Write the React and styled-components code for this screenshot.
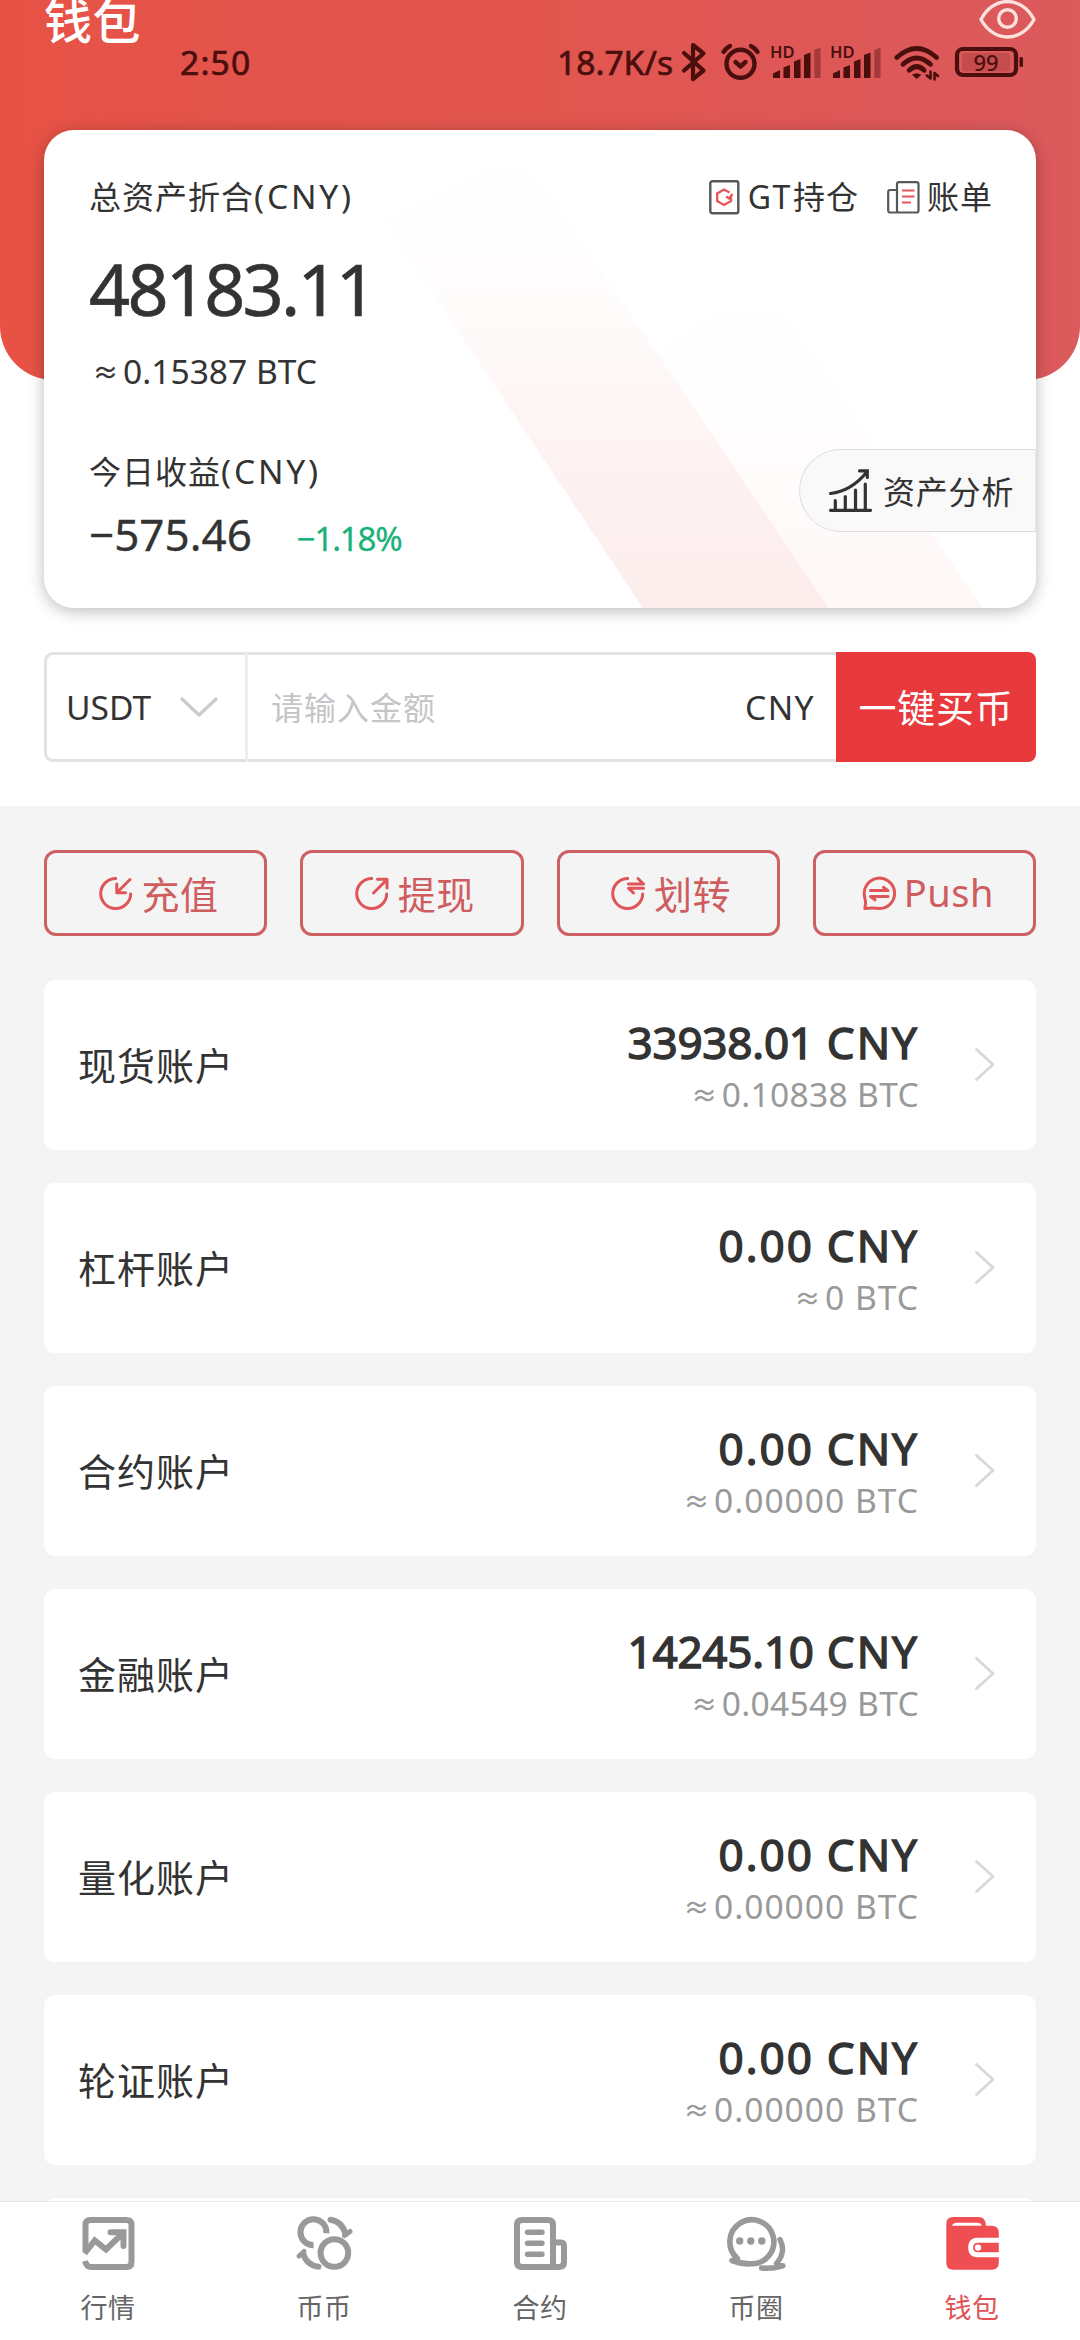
import React from 'react'
import styled, { createGlobalStyle } from 'styled-components'

const GlobalStyle = createGlobalStyle`
  *{
    box-sizing: border-box;
    margin: 0;
    padding: 0;
  }
  body{
    width: 1080px;
    background-color: #fff;
    font-family: "Noto Sans", "Noto Sans CJK SC", sans-serif;
    color: #333;
  }
  svg{
    display: block;
    flex-shrink: 0;
    overflow: visible;
  }
`;

const Page = styled.div`
  position: relative;
  width: 1080px;
  height: 2340px;
  overflow: hidden;
  display: flex;
  flex-direction: column;
`;

const Hero = styled.header`
  height: 380px;
  flex-shrink: 0;
  border-radius: 0 0 54px 54px;
  background: linear-gradient(90deg, #e85245 0%, #e3544b 22%, #e2564e 50%, #df5756 72%, #db5a5c 100%);
`;

const TitleBar = styled.div`
  height: 42px;
  padding: 0 44px;
  display: flex;
  justify-content: space-between;
  h1{
    font-size: 48px;
    line-height: 42px;
    font-weight: 500;
    letter-spacing: 0.5px;
    color: #fff;
  }
`;

const StatusBar = styled.div`
  position: absolute;
  top: 0;
  left: 0;
  right: 0;
  height: 124px;
  padding: 0 57px 0 180px;
  display: flex;
  align-items: center;
  font-size: 33.6px;
  color: #4a0f0d;
  -webkit-text-stroke: 0.7px #4a0f0d;
  .status__time{
    letter-spacing: 1.2px;
  }
  .status__speed{
    margin-left: auto;
    width: 118px;
    white-space: nowrap;
  }
`;

const StatusIcon = styled.svg`
  height: 40px;
  width: ${({ $w }) => $w}px;
  margin-left: ${({ $gap }) => $gap}px;
  -webkit-text-stroke: 0;
`;

const Card = styled.section`
  position: relative;
  flex-shrink: 0;
  height: 478px;
  margin: -250px 44px 0;
  padding: 43px 0 0 45px;
  border-radius: 30px;
  background-color: #fff;
  box-shadow: 0 3px 16px rgba(0, 0, 0, 0.27);
`;

const Stripes = styled.svg`
  position: absolute;
  top: 0;
  left: 0;
`;

const CardRow = styled.div`
  position: relative;
  display: flex;
  justify-content: space-between;
  align-items: flex-start;
  margin-top: ${({ $top }) => $top || 0}px;
`;

const Label = styled.p`
  height: 48px;
  font-size: 32px;
  line-height: 47px;
  letter-spacing: 1px;
  white-space: nowrap;
  span{
    font-size: 33.6px;
    line-height: 1;
    letter-spacing: 2.8px;
  }
`;

const Total = styled.p`
  position: relative;
  margin-top: 22px;
  font-size: 72px;
  line-height: 90px;
  letter-spacing: -2.8px;
  -webkit-text-stroke: 0.6px #333;
`;

const TotalBtc = styled.p`
  position: relative;
  height: 40px;
  margin: 18px 0 0 4px;
  font-size: 33.6px;
  line-height: 40px;
`;

// the sign sits closer to its number than a full space
const Approx = styled.span`
  margin-right: 5px;
  font-size: 25px;
  line-height: 1;
  letter-spacing: 0;
  position: relative;
  top: -2px;
  -webkit-text-stroke: 0.5px currentColor;
`;

const Profit = styled.p`
  margin-top: 8px;
  font-size: 44px;
  line-height: 60px;
  -webkit-text-stroke: 0.3px #333;
  span{
    margin-left: 45px;
    font-size: 33px;
    letter-spacing: -1.2px;
    color: #1bb17a;
    -webkit-text-stroke: 0.3px #1bb17a;
  }
`;

const CardLinks = styled.div`
  display: flex;
  gap: 28px;
  padding-right: 43px;
`;

const CardLink = styled.a`
  display: flex;
  align-items: center;
  gap: ${({ $gap }) => $gap}px;
  font-size: 32px;
  line-height: 48px;
  letter-spacing: 1px;
  .link__latin{
    margin-right: 1px;
    letter-spacing: 1.6px;
  }
`;

const Analysis = styled.a`
  width: 237px;
  height: 83px;
  margin-top: 1px;
  padding-left: 29px;
  display: flex;
  align-items: center;
  gap: 11px;
  border: 1.5px solid #dedede;
  border-right-color: #e8e8e8;
  border-radius: 42px 0 0 42px;
  background-color: #faf9fa;
  font-size: 32px;
  letter-spacing: 0.8px;
  span{
    padding-bottom: 2px;
  }
`;

const BuyRow = styled.div`
  flex-shrink: 0;
  height: 110px;
  margin: 44px 44px;
  display: flex;
  font-size: 33.6px;
`;

const CoinSelect = styled.div`
  width: 204px;
  padding: 0 27px 1px 19px;
  display: flex;
  align-items: center;
  justify-content: space-between;
  border: 3px solid #e2e2e2;
  border-right-color: #eeeeee;
  border-radius: 9px 0 0 9px;
`;

const AmountBox = styled.div`
  flex: 1;
  padding: 0 21px 1px 23px;
  display: flex;
  align-items: center;
  justify-content: space-between;
  border-top: 3px solid #e2e2e2;
  border-bottom: 3px solid #e2e2e2;
  letter-spacing: 1.4px;
  .amount__hint{
    padding-bottom: 2px;
    font-size: 32px;
    letter-spacing: 1px;
    color: #c5c5c8;
  }
`;

const BuyButton = styled.button`
  width: 200px;
  padding-bottom: 3px;
  border: none;
  border-radius: 0 8px 8px 0;
  background-color: #e83a3c;
  color: #fff;
  font-family: inherit;
  font-size: 38px;
  letter-spacing: 0.8px;
  white-space: nowrap;
`;

const Panel = styled.main`
  flex: 1;
  min-height: 0;
  overflow: hidden;
  padding: 44px 44px 0;
  background-color: #f4f4f4;
`;

const Actions = styled.div`
  display: grid;
  grid-template-columns: repeat(4, 1fr);
  gap: 33px;
`;

const ActionButton = styled.button`
  height: 86px;
  display: flex;
  align-items: center;
  justify-content: center;
  gap: 9px;
  padding-left: 6px;
  border: 3px solid #cd6063;
  border-radius: 12px;
  background: none;
  color: #cf5d5f;
  font-family: inherit;
  font-size: 38px;
  letter-spacing: 0.5px;
  span{
    padding-bottom: 2px;
  }
`;

const AccountList = styled.div`
  margin-top: 44px;
  display: flex;
  flex-direction: column;
  gap: 33px;
`;

const AccountRow = styled.div`
  height: 170px;
  flex-shrink: 0;
  padding: 0 41px 0 34px;
  display: flex;
  align-items: center;
  border-radius: 11px;
  background-color: #fff;
  .account__name{
    flex: 1;
    padding-bottom: 3px;
    font-size: 38px;
    letter-spacing: 1px;
  }
  .account__sum{
    height: 170px;
    padding-top: 32px;
    margin-right: 56px;
    text-align: right;
  }
`;

// zeros are set a little wider than the other digits
const Cny = styled.p`
  font-size: 44px;
  line-height: 60px;
  letter-spacing: ${({ $empty }) => ($empty ? 2 : -0.2)}px;
  -webkit-text-stroke: 1.4px #333;
  span{
    margin-left: 13px;
    letter-spacing: 2px;
  }
`;

const Btc = styled.p`
  font-size: 33.6px;
  line-height: 44px;
  letter-spacing: ${({ $empty }) => ($empty ? 1 : 0.3)}px;
  color: #999;
`;

const TabBar = styled.nav`
  height: 139px;
  flex-shrink: 0;
  display: grid;
  grid-template-columns: repeat(5, 1fr);
  border-top: 1px solid #e8e8e8;
  background-color: #fff;
`;

const Tab = styled.a`
  display: flex;
  flex-direction: column;
  align-items: center;
  padding-top: 13px;
  font-size: 27px;
  letter-spacing: 0.5px;
  line-height: 40px;
  color: ${({ $active }) => ($active ? '#e05154' : '#666')};
  svg{
    margin-bottom: 16px;
  }
`;

function SignalIcon({ gap }) {
  return (
    <StatusIcon $w={50} $gap={gap} viewBox="0 0 50 40" fill="#4a0f0d">
      <text x="-1" y="16" fontSize="16.5" fontWeight="600">HD</text>
      <path d="M2 36V31.5L9 28V36Z" />
      <path d="M12.5 36V25.5L19 23V36Z" />
      <path d="M23 36V19.5L29.5 17V36Z" />
      <path d="M33 36V13L39.5 10.5V36Z" />
      <path d="M43.3 36V8L49.5 5.5V36Z" opacity="0.4" />
    </StatusIcon>
  )
}

function Status() {
  const line = { fill: 'none', stroke: '#4a0f0d', strokeLinecap: 'round', strokeLinejoin: 'round' }
  return (
    <StatusBar>
      <span className="status__time">2:50</span>
      <span className="status__speed">18.7K/s</span>
      <StatusIcon $w={24} $gap={7} viewBox="0 0 24 40" {...line} strokeWidth="4.2">
        <path d="M2 11L21.5 28.5L11 37V3L21.5 11.5L2 28.5" />
      </StatusIcon>
      <StatusIcon $w={39} $gap={15} viewBox="0 0 39 40" {...line} strokeWidth="4.4">
        <circle cx="19.5" cy="21.8" r="14" />
        <path d="M2.5 10Q5 6 9 4M36.5 10Q34 6 30 4M14.5 20L19.5 24.5L24.5 20" />
      </StatusIcon>
      <SignalIcon gap={11} />
      <SignalIcon gap={10} />
      <StatusIcon $w={45} $gap={13} viewBox="0 0 45 40" {...line} strokeWidth="4.8">
        <path d="M2.8 15.5Q22.7 -2.5 42.6 15.5M9 22.3Q22.7 9.5 36.4 22.3M15.2 28.3Q22.7 21 30.2 28.3" />
        <path d="M18 32.8Q22.7 29.5 27.4 32.8L22.7 37Z" fill="#4a0f0d" stroke="none" />
        <path d="M36.5 29.5V36.5L32.8 33.5M40.5 37.5V31L44 34" strokeWidth="2.6" />
      </StatusIcon>
      <StatusIcon $w={68} $gap={16} viewBox="0 0 68 40">
        <rect x="2" y="7" width="59" height="26" rx="6" fill="none" stroke="#4a0f0d" strokeWidth="4.2" />
        <rect x="7" y="11" width="48" height="18.5" rx="2" fill="#4a0f0d" opacity="0.16" />
        <rect x="64.5" y="15" width="3.5" height="10" rx="1.5" fill="#4a0f0d" />
        <text x="31" y="28.5" textAnchor="middle" fontSize="22" fontWeight="500" fill="#4a0f0d">99</text>
      </StatusIcon>
    </StatusBar>
  )
}

function AssetCard() {
  return (
    <Card>
      <Stripes width="992" height="478" viewBox="0 0 992 478">
        <defs>
          <linearGradient id="stripeMain" x1="0" y1="0" x2="0" y2="1">
            <stop offset="0" stopColor="#f8cfcc" stopOpacity="0" />
            <stop offset="0.3" stopColor="#f8cfcc" stopOpacity="0.06" />
            <stop offset="0.75" stopColor="#f8cfcc" stopOpacity="0.29" />
            <stop offset="1" stopColor="#f8cfcc" stopOpacity="0.36" />
          </linearGradient>
          <linearGradient id="stripeSide" x1="0" y1="0" x2="0" y2="1">
            <stop offset="0" stopColor="#fadbd6" stopOpacity="0" />
            <stop offset="0.5" stopColor="#fadbd6" stopOpacity="0.06" />
            <stop offset="1" stopColor="#fadbd6" stopOpacity="0.22" />
          </linearGradient>
        </defs>
        <path d="M340 90L475 20L785 478H599Z" fill="url(#stripeMain)" />
        <path d="M609 223L720 150L938 478H785Z" fill="url(#stripeSide)" />
      </Stripes>
      <CardRow>
        <Label>总资产折合<span>(CNY)</span></Label>
        <CardLinks>
          <CardLink $gap={8}>
            <svg width="31" height="35" viewBox="0 0 31 35" fill="none">
              <rect x="1.3" y="1.3" width="28" height="32" rx="2" stroke="#55585b" strokeWidth="2.4" />
              <path d="M22 16.5V21L15 25L8.2 21V13.5L15 9.5L20.5 12.5M17 16.5L20 18.5L23.5 14" stroke="#e8555a" strokeWidth="2.3" />
            </svg>
            <span><span className="link__latin">GT</span>持仓</span>
          </CardLink>
          <CardLink $gap={7}>
            <svg width="33" height="33" viewBox="0 0 33 33" fill="none">
              <path d="M10 9H3Q1.2 9 1.2 11V29.5Q1.2 31.5 3 31.5H10" stroke="#55585b" strokeWidth="2.2" />
              <rect x="10" y="1.2" width="21.5" height="30.3" rx="2" stroke="#55585b" strokeWidth="2.2" />
              <path d="M15 9.5H27.5M15 15.5H27.5M15 21.5H24" stroke="#e8555a" strokeWidth="2.2" />
            </svg>
            账单
          </CardLink>
        </CardLinks>
      </CardRow>
      <Total>48183.11</Total>
      <TotalBtc><Approx>≈</Approx>0.15387 BTC</TotalBtc>
      <CardRow $top={57}>
        <div>
          <Label>今日收益<span>(CNY)</span></Label>
          <Profit>−575.46<span>−1.18%</span></Profit>
        </div>
        <Analysis>
          <svg width="43" height="43" viewBox="0 0 43 43" fill="none" stroke="#333" strokeWidth="3.2" strokeLinecap="round">
            <path d="M1.5 41.3H41.5M6.3 40V31.5M16.3 40V27.5M26.5 40V21M36.3 40V15" />
            <path d="M1.5 24.5Q22 22 37 4M30.5 1.8H38.3V8.5" />
          </svg>
          <span>资产分析</span>
        </Analysis>
      </CardRow>
    </Card>
  )
}

const ring = 'M16.7 2.5A15 15 0 1 0 31.7 18'

const actions = [
  { text: '充值', paths: [ring, 'M31 3.5L18.5 16M17.8 8V16.7H26.5'] },
  { text: '提现', paths: [ring, 'M18.5 17L31 4.5M22.5 3.2H32V12'] },
  { text: '划转', paths: [ring, 'M17.5 8H32.5L27 2.5M32.5 12.2H17.5L22.5 17'] },
  {
    text: 'Push',
    paths: [
      'M3.8 32.5Q5.5 27 3.8 21.5A15.2 15.2 0 1 1 19 32.5Q11 31.5 3.8 32.5Z',
      'M9.5 14.6H27L22.5 11.3M27 20.6H9.5L14 23.8',
    ],
  },
]

const accounts = [
  { name: '现货账户', cny: '33938.01', btc: '0.10838' },
  { name: '杠杆账户', cny: '0.00', btc: '0' },
  { name: '合约账户', cny: '0.00', btc: '0.00000' },
  { name: '金融账户', cny: '14245.10', btc: '0.04549' },
  { name: '量化账户', cny: '0.00', btc: '0.00000' },
  { name: '轮证账户', cny: '0.00', btc: '0.00000' },
]

function Account({ name, cny, btc }) {
  const empty = Number(cny) === 0
  return (
    <AccountRow>
      <p className="account__name">{name}</p>
      <div className="account__sum">
        <Cny $empty={empty}>{cny}<span>CNY</span></Cny>
        <Btc $empty={empty}><Approx>≈</Approx>{btc} BTC</Btc>
      </div>
      <svg width="20" height="34" viewBox="0 0 20 34" fill="none" stroke="#d8d8d8" strokeWidth="2.8" strokeLinecap="round" strokeLinejoin="round">
        <path d="M1.5 1.5L18 16.5L1.5 31.5" />
      </svg>
    </AccountRow>
  )
}

function Tabs() {
  const line = { fill: 'none', stroke: '#999', strokeWidth: 6, strokeLinecap: 'round' }
  return (
    <TabBar>
      <Tab>
        <svg width="57" height="57" viewBox="0 0 57 57" {...line}>
          <path d="M5.5 36V10Q5.5 5 10.5 5H46.5Q51.5 5 51.5 10V47Q51.5 52 46.5 52H11Q6.5 52 5 46" strokeLinecap="butt" />
          <path d="M4.5 38.5L14.8 25.5L26 34.5L42.5 18.5" strokeLinecap="butt" />
          <path d="M30.5 17.3H43.5V31" />
        </svg>
        行情
      </Tab>
      <Tab>
        <svg width="57" height="57" viewBox="0 0 57 57" {...line}>
          <path d="M17.6 30.2A13 13 0 1 1 30.4 18.2" strokeLinecap="butt" />
          <circle cx="38.4" cy="38" r="13.8" />
          <path d="M34.5 4.8Q46 6.5 49.5 19M22.5 51.8Q10.5 50 7.3 39" />
          <path d="M48.5 20.5L54 16.5M3 41L8 36.5" strokeWidth="5" />
        </svg>
        币币
      </Tab>
      <Tab>
        <svg width="57" height="57" viewBox="0 0 57 57" {...line}>
          <path d="M41 52H10Q5 52 5 47V10Q5 5 10 5H36Q41 5 41 10V52H47Q52 52 52 47V31Q52 27.5 49 27.5H41" />
          <path d="M15.5 17.3H30M15.5 28.3H30M15.5 39.3H30" strokeWidth="5.4" />
        </svg>
        合约
      </Tab>
      <Tab>
        <svg width="63" height="57" viewBox="0 0 63 57" {...line}>
          <path d="M12.5 43.5A22 22 0 1 1 26 48.8Q17 49.2 7 45.5Q12.5 45.5 12.5 43.5Z" strokeLinejoin="round" strokeWidth="5.6" />
          <path d="M55 24.5Q61.5 37 51.5 48.5Q54 51 58 50.8Q47 54 36.5 53" strokeLinejoin="round" strokeWidth="5.4" />
          <g fill="#999" stroke="none">
            <circle cx="14.7" cy="26" r="3.7" />
            <circle cx="25.8" cy="26" r="3.7" />
            <circle cx="36.8" cy="26" r="3.7" />
          </g>
        </svg>
        币圈
      </Tab>
      <Tab $active>
        <svg width="57" height="57" viewBox="0 0 57 57">
          <path d="M2.3 9Q2.3 2 9 2H35Q41.5 2 42 10.8H47.5Q54.8 10.8 54.8 18V47.5Q54.8 54.8 47.5 54.8H9Q2.3 54.8 2.3 47.5Z" fill="#ef4f52" />
          <path d="M8 10.8Q9 7.8 13 7.8H33Q37 7.8 37.8 10.8Z" fill="#fff" />
          <path d="M55.5 25.2H34Q26.6 25.2 26.6 32.5Q26.6 39.8 34 39.8H55.5" fill="none" stroke="#fff" strokeWidth="5" />
          <circle cx="34" cy="32.6" r="3.2" fill="#fff" />
        </svg>
        钱包
      </Tab>
    </TabBar>
  )
}

function App() {
  return (
    <>
      <GlobalStyle />
      <Page>
        <Hero>
          <TitleBar>
            <h1>钱包</h1>
            <svg width="57" height="39" viewBox="0 0 57 39" fill="none" stroke="#fde1de" strokeWidth="3.4">
              <path d="M2 19.5C8 8 18 1.5 28.5 1.5S49 8 55 19.5C49 30.5 39 37 28.5 37S8 30.5 2 19.5Z" strokeLinejoin="round" />
              <circle cx="28.5" cy="18.5" r="8.8" />
            </svg>
          </TitleBar>
        </Hero>
        <AssetCard />
        <BuyRow>
          <CoinSelect>
            USDT
            <svg width="38" height="20" viewBox="0 0 38 20" fill="none" stroke="#ccc" strokeWidth="3.4" strokeLinecap="round" strokeLinejoin="round">
              <path d="M2 2L19 18L36 2" />
            </svg>
          </CoinSelect>
          <AmountBox>
            <span className="amount__hint">请输入金额</span>
            <span>CNY</span>
          </AmountBox>
          <BuyButton>一键买币</BuyButton>
        </BuyRow>
        <Panel>
          <Actions>
            {actions.map(({ text, paths }) => (
              <ActionButton key={text}>
                <svg width="34" height="34" viewBox="0 0 34 34" fill="none" stroke="#e05558" strokeWidth="3" strokeLinecap="round" strokeLinejoin="round">
                  {paths.map((d) => <path key={d} d={d} />)}
                </svg>
                <span>{text}</span>
              </ActionButton>
            ))}
          </Actions>
          <AccountList>
            {accounts.map((item) => <Account key={item.name} {...item} />)}
            <AccountRow />
          </AccountList>
        </Panel>
        <Tabs />
        <Status />
      </Page>
    </>
  )
}

export default App
